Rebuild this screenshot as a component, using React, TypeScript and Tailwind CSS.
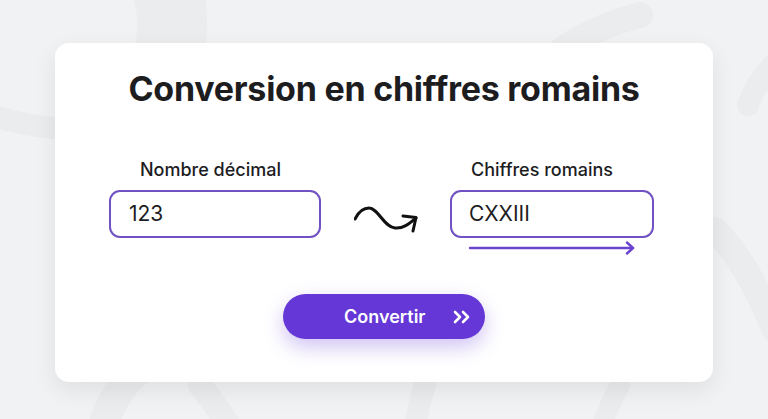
function Backdrop() {
  return (
    <svg className="absolute inset-0 w-full h-full" viewBox="0 0 768 419" preserveAspectRatio="none">
      <g fill="none" stroke="#ebecee" strokeLinecap="round">
        <path d="M-20 112 C 50 135, 100 132, 150 124" strokeWidth="22" />
        <path d="M168 -10 C 175 20, 172 40, 168 60" strokeWidth="70" />
        <path d="M640 15 C 600 25, 575 40, 555 55" strokeWidth="26" />
        <path d="M790 50 C 770 65, 755 85, 748 105" strokeWidth="22" />
        <path d="M715 230 C 740 255, 758 290, 775 330" strokeWidth="26" />
        <path d="M105 419 C 115 395, 125 380, 140 370" strokeWidth="30" />
        <path d="M200 385 C 212 400, 222 415, 232 430" strokeWidth="24" />
        <path d="M425 385 C 420 400, 417 415, 414 430" strokeWidth="22" />
        <path d="M620 385 C 612 400, 605 415, 600 430" strokeWidth="20" />
      </g>
    </svg>
  );
}

function Squiggle() {
  return (
    <svg width="66" height="34" viewBox="0 0 66 34" fill="none" stroke="#111" strokeWidth="3" strokeLinecap="round" strokeLinejoin="round">
      <path d="M1 14 C 5 6, 10 3, 15 3 C 24 3, 30 22, 41 23 C 50 24, 57 17, 62 13" />
      <path d="M49 11 L 62 12.5 L 59 26" />
    </svg>
  );
}

function DoubleChevron() {
  return (
    <svg width="18" height="14" viewBox="0 0 18 14" fill="none" stroke="#fff" strokeWidth="2.6" strokeLinecap="round" strokeLinejoin="round">
      <path d="M2 2 L 7 7 L 2 12" />
      <path d="M10 2 L 15 7 L 10 12" />
    </svg>
  );
}

export default function App() {
  return (
    <div className="relative h-[419px] w-full overflow-hidden bg-[#f1f2f3]" style={{ fontFamily: "Inter, 'Liberation Sans', sans-serif" }}>
      <Backdrop />
      <div className="relative flex justify-center pt-[43px]">
        <div className="w-[658px] h-[339px] rounded-[14px] bg-white shadow-[0_8px_24px_rgba(0,0,0,0.08)] flex flex-col items-center">
          <h1 className="mt-[29px] mb-0 text-[34px] leading-none font-bold text-[#1d1d1f] tracking-[-0.25px]">
            Conversion en chiffres romains
          </h1>

          <div className="w-full flex items-start px-[54px] mt-[55px]">
            <div className="flex flex-col w-[212px]">
              <span className="ml-[31px] text-[18px] font-medium text-[#1d1d1f] leading-none">Nombre décimal</span>
              <div className="mt-[11px] h-[48px] rounded-[11px] border-2 border-[#7052c2] flex items-center px-[18px] text-[21px] text-[#1d1d1f]">
                123
              </div>
            </div>

            <div className="ml-[33px] mt-[44px]">
              <Squiggle />
            </div>

            <div className="ml-[30px] flex flex-col w-[204px]">
              <span className="ml-[21px] text-[18px] font-medium text-[#1d1d1f] leading-none">Chiffres romains</span>
              <div className="mt-[11px] h-[48px] rounded-[11px] border-2 border-[#7052c2] flex items-center px-[17px] text-[21px] text-[#1d1d1f]">
                CXXIII
              </div>
              <svg className="mt-[3px] ml-[18px]" width="170" height="14" viewBox="0 0 170 14" fill="none" stroke="#6a43cf" strokeWidth="2.4" strokeLinecap="round" strokeLinejoin="round">
                <path d="M2 7 H 165" />
                <path d="M159 1.5 L 165 7 L 159 12.5" />
              </svg>
            </div>
          </div>

          <button className="mt-[39px] w-[202px] h-[45px] rounded-full bg-[#6437d6] text-white shadow-[0_8px_20px_rgba(100,55,214,0.3)] flex items-center pl-[61px] pr-[14px]">
            <span className="text-[18px] font-semibold">Convertir</span>
            <span className="ml-auto flex">
              <DoubleChevron />
            </span>
          </button>
        </div>
      </div>
    </div>
  );
}
